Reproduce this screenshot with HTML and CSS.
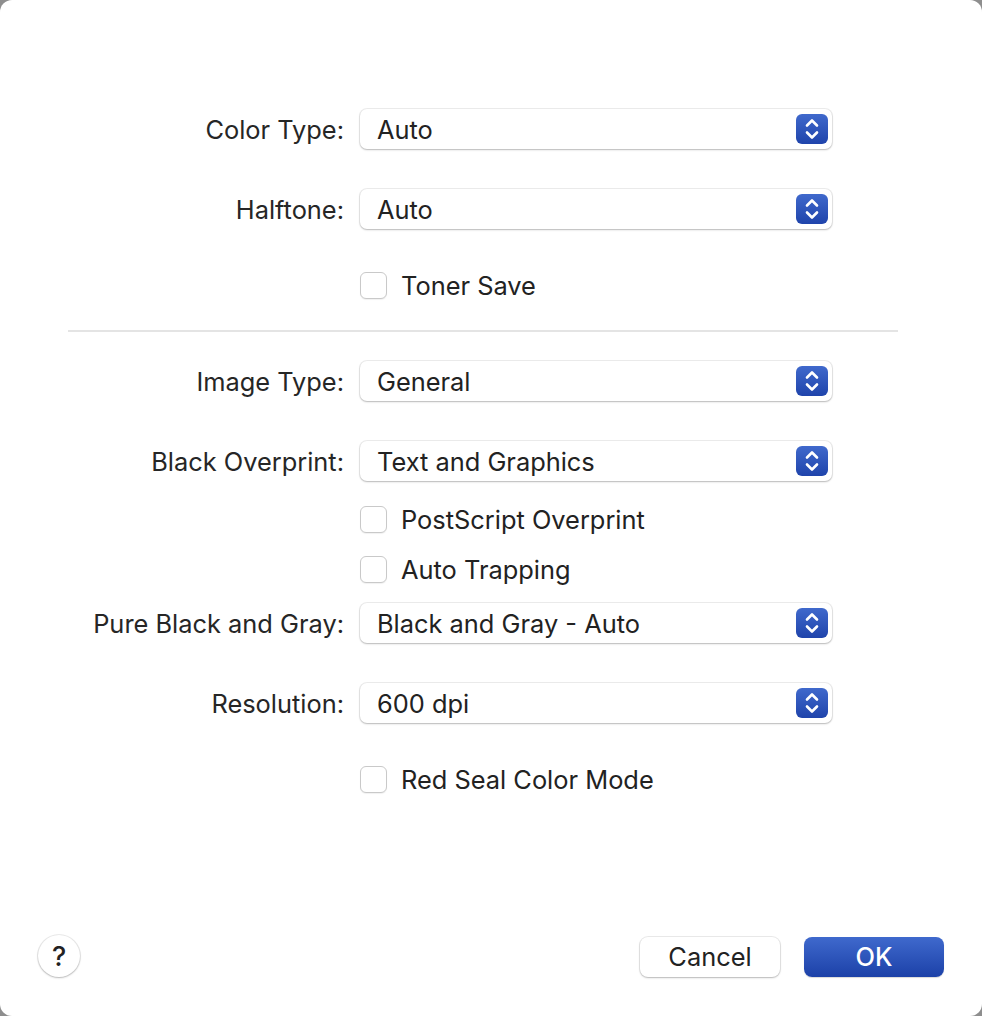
FILE: index.html
```html
<!DOCTYPE html>
<html lang="en">
<head>
<meta charset="utf-8">
<title>Color Options</title>
<link rel="stylesheet" href="styles.css">
</head>
<body>
<div class="window">
  <div class="form">
    <div class="row popup-row">
      <div class="label">Color Type:</div>
      <div class="popup"><span class="popup-text">Auto</span><span class="stepper"><svg width="32" height="30" viewBox="0 0 32 30"><path d="M11 11.5 L16 6.5 L21 11.5 M11 18.5 L16 23.5 L21 18.5" fill="none" stroke="#fff" stroke-width="2.6" stroke-linecap="round" stroke-linejoin="round"/></svg></span></div>
    </div>
    <div class="row popup-row gap40">
      <div class="label">Halftone:</div>
      <div class="popup"><span class="popup-text">Auto</span><span class="stepper"><svg width="32" height="30" viewBox="0 0 32 30"><path d="M11 11.5 L16 6.5 L21 11.5 M11 18.5 L16 23.5 L21 18.5" fill="none" stroke="#fff" stroke-width="2.6" stroke-linecap="round" stroke-linejoin="round"/></svg></span></div>
    </div>
    <div class="row check-row gap36">
      <div class="label"></div>
      <label class="check"><span class="box"></span><span>Toner Save</span></label>
    </div>
    <div class="separator"></div>
    <div class="row popup-row gap29">
      <div class="label">Image Type:</div>
      <div class="popup"><span class="popup-text">General</span><span class="stepper"><svg width="32" height="30" viewBox="0 0 32 30"><path d="M11 11.5 L16 6.5 L21 11.5 M11 18.5 L16 23.5 L21 18.5" fill="none" stroke="#fff" stroke-width="2.6" stroke-linecap="round" stroke-linejoin="round"/></svg></span></div>
    </div>
    <div class="row popup-row gap40">
      <div class="label">Black Overprint:</div>
      <div class="popup"><span class="popup-text">Text and Graphics</span><span class="stepper"><svg width="32" height="30" viewBox="0 0 32 30"><path d="M11 11.5 L16 6.5 L21 11.5 M11 18.5 L16 23.5 L21 18.5" fill="none" stroke="#fff" stroke-width="2.6" stroke-linecap="round" stroke-linejoin="round"/></svg></span></div>
    </div>
    <div class="row check-row gap18">
      <div class="label"></div>
      <label class="check"><span class="box"></span><span>PostScript Overprint</span></label>
    </div>
    <div class="row check-row gap10">
      <div class="label"></div>
      <label class="check"><span class="box"></span><span>Auto Trapping</span></label>
    </div>
    <div class="row popup-row gap14">
      <div class="label">Pure Black and Gray:</div>
      <div class="popup"><span class="popup-text">Black and Gray - Auto</span><span class="stepper"><svg width="32" height="30" viewBox="0 0 32 30"><path d="M11 11.5 L16 6.5 L21 11.5 M11 18.5 L16 23.5 L21 18.5" fill="none" stroke="#fff" stroke-width="2.6" stroke-linecap="round" stroke-linejoin="round"/></svg></span></div>
    </div>
    <div class="row popup-row gap40">
      <div class="label">Resolution:</div>
      <div class="popup"><span class="popup-text">600 dpi</span><span class="stepper"><svg width="32" height="30" viewBox="0 0 32 30"><path d="M11 11.5 L16 6.5 L21 11.5 M11 18.5 L16 23.5 L21 18.5" fill="none" stroke="#fff" stroke-width="2.6" stroke-linecap="round" stroke-linejoin="round"/></svg></span></div>
    </div>
    <div class="row check-row gap36">
      <div class="label"></div>
      <label class="check"><span class="box"></span><span>Red Seal Color Mode</span></label>
    </div>
  </div>
  <div class="footer">
    <button class="help" type="button">?</button>
    <div class="actions">
      <button class="btn cancel" type="button">Cancel</button>
      <button class="btn ok" type="button">OK</button>
    </div>
  </div>
</div>
</body>
</html>
```
FILE: styles.css
```css
html, body {
  margin: 0;
  padding: 0;
}
body {
  background: #8e8e8e;
  width: 982px;
  height: 1016px;
  overflow: hidden;
  font-family: Inter, "Liberation Sans", Arial, sans-serif;
  color: #262626;
}
.window {
  box-sizing: border-box;
  width: 982px;
  height: 1016px;
  background: #ffffff;
  border-radius: 12px;
  display: flex;
  flex-direction: column;
  justify-content: space-between;
  padding: 109px 38px 38px 38px;
}
.form {
  display: flex;
  flex-direction: column;
}
.row {
  display: flex;
  align-items: center;
  height: 40px;
}
.gap40 { margin-top: 40px; }
.gap36 { margin-top: 36px; }
.gap29 { margin-top: 29px; }
.gap18 { margin-top: 18px; }
.gap14 { margin-top: 14px; }
.gap10 { margin-top: 10px; }
.label {
  width: 306px;
  flex: none;
  text-align: right;
  font-size: 25.4px;
  margin-right: 16px;
  white-space: nowrap;
}
.popup {
  box-sizing: border-box;
  width: 472px;
  height: 40px;
  background: #fff;
  border-radius: 7px;
  box-shadow: 0 0 0 1px rgba(0,0,0,0.07), 0 1px 2px rgba(0,0,0,0.22);
  display: flex;
  align-items: center;
  justify-content: space-between;
  padding: 0 4px 0 17px;
}
.popup-text {
  font-size: 25.4px;
  color: #222;
}
.stepper {
  width: 32px;
  height: 30px;
  border-radius: 6px;
  background: linear-gradient(#4069cc, #1f44ab);
  display: flex;
}
.check {
  display: flex;
  align-items: center;
  gap: 14px;
  font-size: 25.4px;
  color: #222;
}
.box {
  box-sizing: border-box;
  width: 27px;
  height: 27px;
  border-radius: 6px;
  background: #fff;
  border: 1px solid #c9c9c9;
  box-shadow: 0 1px 1px rgba(0,0,0,0.06);
}
.separator {
  height: 2px;
  background: #e4e4e4;
  margin: 25px 46px 0 30px;
}
.footer {
  display: flex;
  align-items: center;
  justify-content: space-between;
}
.help {
  width: 42px;
  height: 42px;
  border-radius: 50%;
  border: none;
  background: #fff;
  box-shadow: 0 0 0 1px rgba(0,0,0,0.08), 0 1px 2px rgba(0,0,0,0.22);
  font-family: Inter, "Liberation Sans", sans-serif;
  font-size: 27px;
  font-weight: 500;
  color: #222;
  padding: 0;
  margin-bottom: 1px;
}
.actions {
  display: flex;
  gap: 24px;
}
.btn {
  width: 140px;
  height: 40px;
  border: none;
  border-radius: 8px;
  font-family: Inter, "Liberation Sans", sans-serif;
  font-size: 25.4px;
  padding: 0;
}
.cancel {
  background: #fff;
  color: #222;
  box-shadow: 0 0 0 1px rgba(0,0,0,0.08), 0 1px 2px rgba(0,0,0,0.22);
}
.ok {
  background: linear-gradient(#3f69cd, #1c41a8);
  color: #fff;
  font-weight: 500;
  box-shadow: 0 1px 1px rgba(0,0,0,0.15);
}
```
